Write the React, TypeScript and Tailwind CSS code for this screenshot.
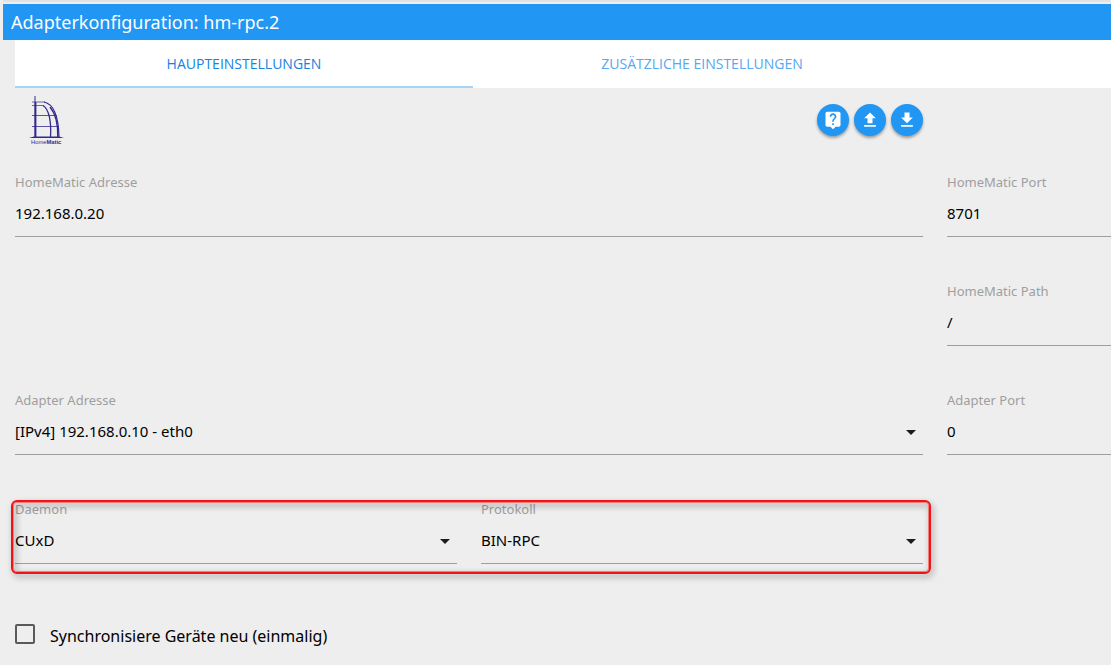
import React from "react";

type FieldProps = {
  id: string;
  label: string;
  value: string;
};

const labelStyle = "block h-4 text-[13px] leading-4 text-[#9e9e9e]";
const controlStyle =
  "block h-[47px] w-full appearance-none rounded-none border-0 border-b border-[#9e9e9e] bg-transparent p-0 text-[15px] text-black outline-none";

const TextField = ({ id, label, value }: FieldProps) => (
  <div>
    <label htmlFor={id} className={labelStyle}>
      {label}
    </label>
    <input id={id} type="text" defaultValue={value} className={controlStyle} />
  </div>
);

const SelectField = ({ id, label, value }: FieldProps) => (
  <div>
    <label htmlFor={id} className={labelStyle}>
      {label}
    </label>
    <div className="relative">
      <select id={id} defaultValue={value} className={controlStyle}>
        <option>{value}</option>
      </select>
      <svg
        viewBox="0 0 24 24"
        className="pointer-events-none absolute inset-y-0 right-0 my-auto h-6 w-6 fill-[#1c1c1c]"
      >
        <path d="M7 10l5 5 5-5z" />
      </svg>
    </div>
  </div>
);

const RoundButton = ({ title, d }: { title: string; d: string }) => (
  <button
    type="button"
    aria-label={title}
    className="flex h-8 w-8 items-center justify-center rounded-full bg-[#2196f3] shadow-[0_2px_3px_rgba(0,0,0,0.35)]"
  >
    <svg viewBox="0 0 24 24" className="h-5 w-5 fill-white">
      <path d={d} />
    </svg>
  </button>
);

const Logo = () => (
  <svg viewBox="0 0 36 50" className="h-[50px] w-9" fill="none" stroke="#352a8c">
    <path d="M6 0v41" strokeWidth="1" />
    <path d="M6.500 6v35" strokeWidth="1.800" />
    <path d="M3 6h13" strokeWidth="0.700" />
    <path d="M3 9.500h12" strokeWidth="0.700" />
    <path d="M3 19.500h25" strokeWidth="0.800" />
    <path d="M3 30.500h27" strokeWidth="0.800" />
    <path d="M15 6C25 8 29.500 21 30 41" strokeWidth="1.200" />
    <path d="M21 11C27 18 29 29 28.800 41" strokeWidth="1.400" />
    <path d="M14 9.500C20 13 22.500 26 21.500 41" strokeWidth="1.300" />
    <path d="M0 42l5-1.500h25l5 1.500z" fill="#352a8c" stroke="none" />
    <text
      x="2"
      y="47.500"
      fontSize="5.800"
      fontFamily="Liberation Sans, sans-serif"
      fill="#352a8c"
      stroke="none"
    >
      Home<tspan fontWeight="bold">Matic</tspan>
    </text>
  </svg>
);

const App = () => {
  return (
    <main className="min-h-screen bg-[#eeeeee] pl-[3px] font-['Noto_Sans',sans-serif] text-black">
      <div className="h-1 border-t-2 border-[#e2e2e2]"></div>
      <h1 className="h-9 bg-[#2196f3] pl-2 text-[18px] leading-9 text-white">
        Adapterkonfiguration: hm-rpc.2
      </h1>

      <div className="pl-3">
        {/* tabs */}
        <nav className="flex h-12 bg-white pr-[180px] font-['Open_Sans',sans-serif] text-[14px]">
          <a
            href="#main"
            className="flex-1 border-b-2 border-[#a6d5fa] text-center leading-12 text-[#1583e0]"
          >
            HAUPTEINSTELLUNGEN
          </a>
          <a href="#extra" className="flex-1 text-center leading-12 text-[#56a8ef]">
            ZUSÄTZLICHE EINSTELLUNGEN
          </a>
        </nav>

        {/* logo and actions */}
        <div className="grid h-[86px] grid-cols-[minmax(0,1fr)_164px] gap-x-6">
          <div className="flex items-start justify-between">
            <div className="pt-2 pl-[14px]">
              <Logo />
            </div>
            <div className="flex gap-[5px] pt-4">
              <RoundButton
                title="Hilfe"
                d="M19 2H5c-1.110 0-2 .9-2 2v14c0 1.100.89 2 2 2h4l3 3 3-3h4c1.100 0 2-.9 2-2V4c0-1.100-.9-2-2-2zm-6 16h-2v-2h2v2zm2.070-7.750l-.9.920C13.450 11.900 13 12.500 13 14h-2v-.5c0-1.100.45-2.100 1.170-2.830l1.240-1.260c.37-.36.59-.86.59-1.410 0-1.100-.9-2-2-2s-2 .9-2 2H8c0-2.210 1.790-4 4-4s4 1.790 4 4c0 .88-.36 1.680-.93 2.250z"
              />
              <RoundButton title="Laden" d="M9 16h6v-6h4l-7-7-7 7h4zm-4 2h14v2H5z" />
              <RoundButton title="Speichern" d="M19 9h-4V3H9v6H5l7 7 7-7zM5 18v2h14v-2H5z" />
            </div>
          </div>
        </div>

        {/* fields */}
        <form className="grid grid-cols-[minmax(0,1fr)_164px] gap-x-6 gap-y-[46px]">
          <TextField id="homematicAddress" label="HomeMatic Adresse" value="192.168.0.20" />
          <TextField id="homematicPort" label="HomeMatic Port" value="8701" />
          <div className="col-start-2">
            <TextField id="homematicPath" label="HomeMatic Path" value="/" />
          </div>
          <SelectField
            id="adapterAddress"
            label="Adapter Adresse"
            value="[IPv4] 192.168.0.10 - eth0"
          />
          <TextField id="adapterPort" label="Adapter Port" value="0" />

          <div className="relative grid grid-cols-2 gap-x-6">
            <SelectField id="daemon" label="Daemon" value="CUxD" />
            <SelectField id="protocol" label="Protokoll" value="BIN-RPC" />
            {/* highlight frame */}
            <div className="pointer-events-none absolute -top-px -right-2 -bottom-[10px] -left-1 rounded-md border-2 border-[#f01515] shadow-[inset_0_0_0_1px_#f08080] drop-shadow-[2px_3px_3px_rgba(0,0,0,0.35)]"></div>
          </div>

          <div className="col-start-1 flex h-12 items-center pt-1">
            <input
              id="sync"
              type="checkbox"
              className="mb-1 h-5 w-5 appearance-none rounded-xs border-2 border-[#5a5a5a]"
            />
            <label htmlFor="sync" className="pl-[15px] text-[16px]">
              Synchronisiere Geräte neu (einmalig)
            </label>
          </div>
        </form>
      </div>
    </main>
  );
};

export default App;
